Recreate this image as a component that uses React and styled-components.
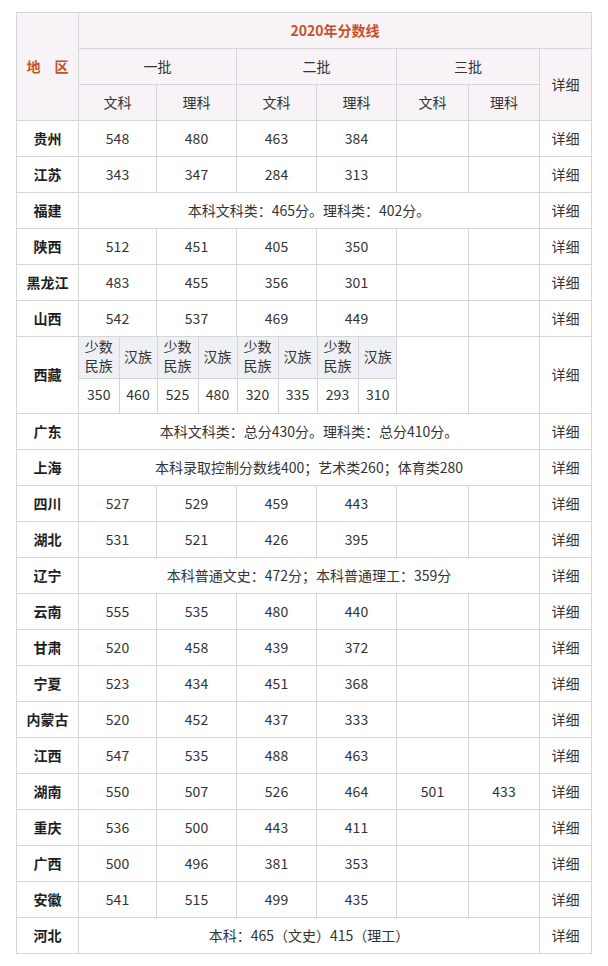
import React from "react";
import styled, { createGlobalStyle } from "styled-components";

const Global = createGlobalStyle`
  html, body { margin: 0; padding: 0; background: #fff; }
  body { font-family: "Noto Sans CJK SC", "Microsoft YaHei", sans-serif; }
`;

const BORDER = "#d6d6da";

const Page = styled.div`
  padding: 12px 16px;
  width: 575px;
`;

const Table = styled.table`
  width: 575px;
  border-collapse: collapse;
  table-layout: fixed;
  font-size: 14px;
  color: #333;
  border: 1px solid ${BORDER};
`;

const Row = styled.tr`
  height: ${(p) => p.$h || 36}px;
`;

const Cell = styled.td`
  border: 1px solid ${BORDER};
  text-align: center;
  vertical-align: middle;
  padding: 0 0 2px;
  line-height: 20px;
  background: ${(p) => (p.$head ? "#f7f3f7" : "#fff")};
  color: ${(p) => (p.$accent ? "#c9502a" : p.$bold ? "#1e1e1e" : "#333")};
  font-weight: ${(p) => (p.$bold || p.$accent ? 700 : 400)};
  white-space: nowrap;
`;

const NestedCell = styled.td`
  border: 1px solid ${BORDER};
  padding: 0;
  vertical-align: top;
`;

const SubTable = styled.table`
  width: 100%;
  border-collapse: collapse;
  table-layout: fixed;
  font-size: 14px;
  color: #333;
`;

const SubRow = styled.tr`
  height: ${(p) => p.$h}px;
`;

const SubCell = styled.td`
  text-align: center;
  vertical-align: middle;
  padding: 0 0 2px;
  line-height: 19px;
  background: ${(p) => (p.$head ? "#eef0f5" : "#fff")};
  border-right: ${(p) => (p.$last ? "none" : `1px solid ${BORDER}`)};
  border-bottom: ${(p) => (p.$head ? `1px solid ${BORDER}` : "none")};
`;

const cols = [62, 78, 80, 80, 80, 72, 71, 52];
const subCols = [40, 38, 41, 39, 41, 39, 41, 39];

const rows1 = [
  ["贵州", [548, 480, 463, 384, "", ""]],
  ["江苏", [343, 347, 284, 313, "", ""]],
  ["福建", "本科文科类：465分。理科类：402分。"],
  ["陕西", [512, 451, 405, 350, "", ""]],
  ["黑龙江", [483, 455, 356, 301, "", ""]],
  ["山西", [542, 537, 469, 449, "", ""]],
];

const rows2 = [
  ["广东", "本科文科类：总分430分。理科类：总分410分。"],
  ["上海", "本科录取控制分数线400；艺术类260；体育类280"],
  ["四川", [527, 529, 459, 443, "", ""]],
  ["湖北", [531, 521, 426, 395, "", ""]],
  ["辽宁", "本科普通文史：472分；本科普通理工：359分"],
  ["云南", [555, 535, 480, 440, "", ""]],
  ["甘肃", [520, 458, 439, 372, "", ""]],
  ["宁夏", [523, 434, 451, 368, "", ""]],
  ["内蒙古", [520, 452, 437, 333, "", ""]],
  ["江西", [547, 535, 488, 463, "", ""]],
  ["湖南", [550, 507, 526, 464, 501, 433]],
  ["重庆", [536, 500, 443, 411, "", ""]],
  ["广西", [500, 496, 381, 353, "", ""]],
  ["安徽", [541, 515, 499, 435, "", ""]],
  ["河北", "本科：465（文史）415（理工）"],
];

const tibet = [350, 460, 525, 480, 320, 335, 293, 310];

function DataRow({ name, data }) {
  return (
    <Row>
      <Cell $bold>{name}</Cell>
      {Array.isArray(data) ? (
        data.map((v, i) => <Cell key={i}>{v}</Cell>)
      ) : (
        <Cell colSpan={6}>{data}</Cell>
      )}
      <Cell>详细</Cell>
    </Row>
  );
}

export default function App() {
  return (
    <Page>
      <Global />
      <Table>
        <colgroup>
          {cols.map((w, i) => (
            <col key={i} style={{ width: w }} />
          ))}
        </colgroup>
        <thead>
          <Row>
            <Cell $head $accent rowSpan={3}>地　区</Cell>
            <Cell $head $accent colSpan={7}>2020年分数线</Cell>
          </Row>
          <Row>
            <Cell $head colSpan={2}>一批</Cell>
            <Cell $head colSpan={2}>二批</Cell>
            <Cell $head colSpan={2}>三批</Cell>
            <Cell $head rowSpan={2}>详细</Cell>
          </Row>
          <Row>
            <Cell $head>文科</Cell>
            <Cell $head>理科</Cell>
            <Cell $head>文科</Cell>
            <Cell $head>理科</Cell>
            <Cell $head>文科</Cell>
            <Cell $head>理科</Cell>
          </Row>
        </thead>
        <tbody>
          {rows1.map(([n, d]) => (
            <DataRow key={n} name={n} data={d} />
          ))}
          <Row $h={77}>
            <Cell $bold>西藏</Cell>
            <NestedCell colSpan={4}>
              <SubTable>
                <colgroup>
                  {subCols.map((w, i) => (
                    <col key={i} style={{ width: w }} />
                  ))}
                </colgroup>
                <tbody>
                  <SubRow $h={41}>
                    {subCols.map((_, i) => (
                      <SubCell key={i} $head $last={i === 7}>
                        {i % 2 === 0 ? (
                          <>
                            少数
                            <br />
                            民族
                          </>
                        ) : (
                          "汉族"
                        )}
                      </SubCell>
                    ))}
                  </SubRow>
                  <SubRow $h={35}>
                    {tibet.map((v, i) => (
                      <SubCell key={i} $last={i === 7}>
                        {v}
                      </SubCell>
                    ))}
                  </SubRow>
                </tbody>
              </SubTable>
            </NestedCell>
            <Cell />
            <Cell />
            <Cell>详细</Cell>
          </Row>
          {rows2.map(([n, d]) => (
            <DataRow key={n} name={n} data={d} />
          ))}
        </tbody>
      </Table>
    </Page>
  );
}
